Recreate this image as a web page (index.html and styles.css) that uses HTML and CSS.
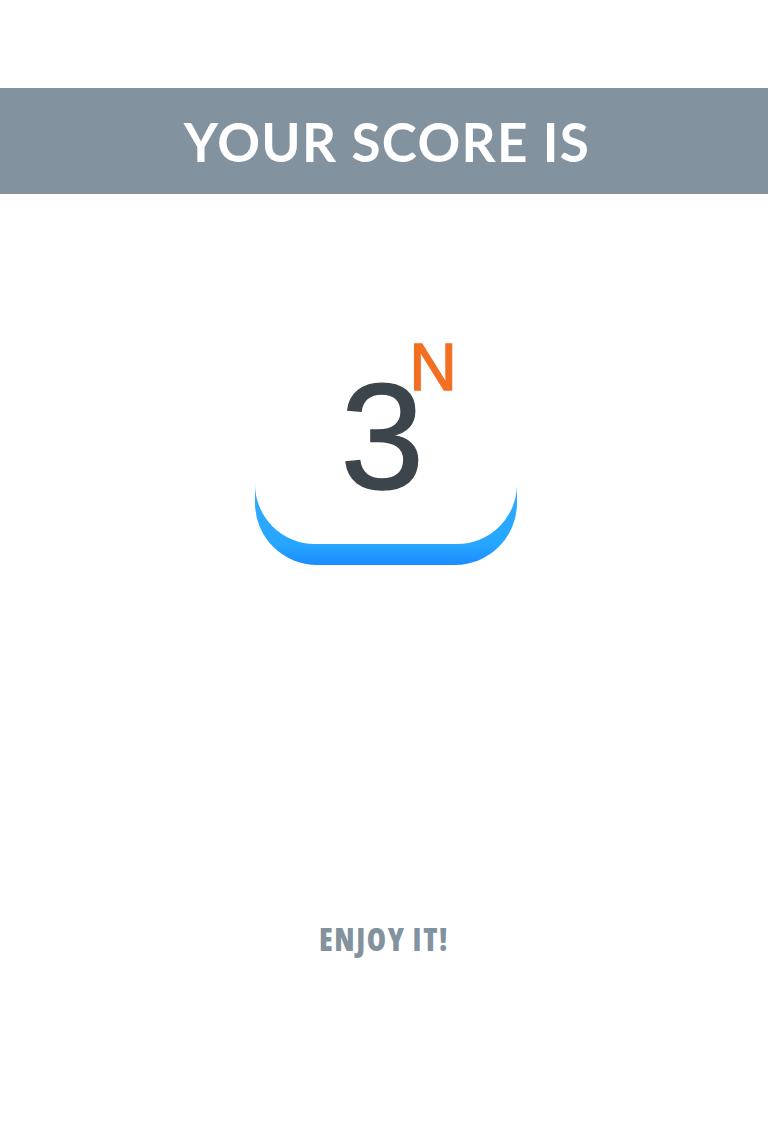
FILE: index.html
```html
<!DOCTYPE html>
<html lang="en">
<head>
<meta charset="utf-8">
<title>Your score</title>
<link rel="stylesheet" href="styles.css">
</head>
<body>
<main class="screen">
  <header class="banner">
    <h1 class="banner-title">YOUR SCORE IS</h1>
  </header>
  <section class="score">
    <div class="tile">
      <div class="tile-face">
        <div class="score-value">
          <span class="digit">3</span>
          <span class="power">N</span>
        </div>
      </div>
    </div>
  </section>
  <p class="footer-note">ENJOY IT!</p>
</main>
</body>
</html>
```

FILE: styles.css
```css
html, body {
  margin: 0;
  padding: 0;
  background: #ffffff;
}

.screen {
  width: 768px;
  height: 1136px;
  display: flex;
  flex-direction: column;
  align-items: stretch;
  padding-top: 88px;
  box-sizing: border-box;
  overflow: hidden;
}

.banner {
  background: #82929e;
  height: 106px;
  box-sizing: border-box;
  padding-top: 27px;
}

.banner-title {
  margin: 0;
  font-family: "Lato", "DejaVu Sans", sans-serif;
  font-weight: 700;
  font-size: 53px;
  line-height: 53px;
  letter-spacing: 1.3px;
  color: #ffffff;
  text-align: center;
  padding-left: 6px;
}

.score {
  display: flex;
  justify-content: center;
  margin-top: 110px;
  padding-left: 4px;
}

.tile {
  width: 262px;
  border-radius: 62px;
  padding-bottom: 21px;
  background: linear-gradient(180deg, #ffffff 0, #ffffff 172px, #2eabff 186px, #27a6ff 240px, #1b8cff 100%);
}

.tile-face {
  height: 240px;
  border-radius: 60px;
  background: #ffffff;
  box-sizing: border-box;
  padding-top: 30px;
}

.score-value {
  display: flex;
  justify-content: center;
  align-items: flex-start;
  padding-left: 25px;
}

.digit {
  font-family: "Liberation Sans", Arial, sans-serif;
  font-size: 151px;
  line-height: 1;
  letter-spacing: -15px;
  color: #3d454c;
  -webkit-text-stroke: 1.4px #3d454c;
  margin-top: 27px;
}

.power {
  font-family: "Liberation Sans", Arial, sans-serif;
  font-weight: 400;
  font-size: 66px;
  line-height: 1;
  color: #f36f21;
  -webkit-text-stroke: 1.4px #f36f21;
  margin-top: 0;
}

.footer-note {
  margin: 358px 0 0;
  font-family: "Open Sans", "Lato", sans-serif;
  font-weight: 800;
  font-stretch: 87.5%;
  font-size: 31px;
  line-height: 32px;
  letter-spacing: 1.6px;
  color: #82929e;
  text-align: center;
}
```
